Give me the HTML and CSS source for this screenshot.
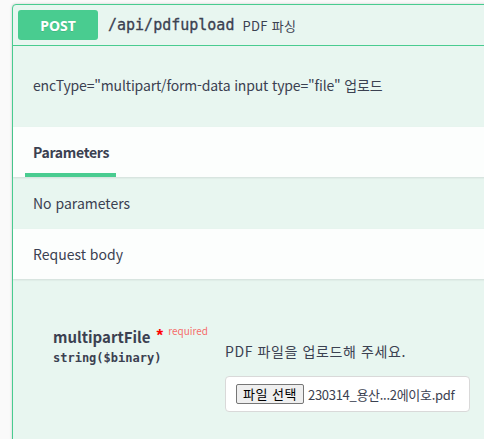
FILE: index.html
```html
<!DOCTYPE html>
<html lang="ko">
<head>
<meta charset="utf-8">
<link rel="stylesheet" href="styles.css">
</head>
<body>
<div class="opblock">
  <div class="summary">
    <span class="method">POST</span>
    <span class="path">/api/pdfupload</span>
    <span class="summary-desc">PDF 파싱</span>
  </div>
  <div class="description">encType="multipart/form-data input type="file" 업로드</div>
  <div class="section-header">
    <div class="tab"><span class="tab-label">Parameters</span></div>
  </div>
  <div class="no-params">No parameters</div>
  <div class="section-header body-header">
    <span class="plain-label">Request body</span>
  </div>
  <div class="body">
    <div class="param-row">
      <div class="param-name">
        <div class="name-line"><span class="name">multipartFile</span><span class="star">*</span><span class="required">required</span></div>
        <div class="type">string($binary)</div>
      </div>
      <div class="param-desc">
        <div class="desc-text">PDF 파일을 업로드해 주세요.</div>
        <div class="file-box"><span class="file-btn">파일 선택</span><span class="file-name">230314_용산...2에이호.pdf</span></div>
      </div>
    </div>
  </div>
</div>
</body>
</html>
```
FILE: styles.css
```css
html, body {
  margin: 0;
  padding: 0;
  background: #fafafa;
  font-family: "Noto Sans CJK KR", "Noto Sans", sans-serif;
  color: #3b4151;
}
body {
  padding: 4px 0 0 12px;
  overflow: hidden;
}
.opblock {
  width: 520px;
  border: 1px solid #49cc90;
  border-radius: 4px;
  background: #e8f6f0;
  box-shadow: 0 0 3px rgba(0,0,0,.19);
}
.summary {
  display: flex;
  align-items: center;
  padding: 5px;
  border-bottom: 1px solid #49cc90;
  height: 30px;
}
.method {
  width: 80px;
  height: 30px;
  background: #49cc90;
  color: #fff;
  border-radius: 3px;
  font-weight: 700;
  font-size: 14px;
  display: flex;
  align-items: center;
  justify-content: center;
  text-shadow: 0 1px 0 rgba(0,0,0,.1);
  font-family: "Noto Sans", sans-serif;
}
.path {
  margin-left: 10px;
  font-family: "DejaVu Sans Mono", monospace;
  font-size: 15px;
  font-weight: 400;
  -webkit-text-stroke: 0.3px #3b4151;
  color: #3b4151;
}
.summary-desc {
  margin-left: 8px;
  font-size: 13px;
  letter-spacing: 0.3px;
  color: #3b4151;
}
.description {
  padding: 29px 20px 0;
  height: 52px;
  font-size: 14px;
  line-height: 20px;
  letter-spacing: -0.15px;
}
.section-header {
  height: 50px;
  background: rgba(255,255,255,.85);
  box-shadow: 0 1px 2px rgba(0,0,0,.1);
  padding: 0 20px;
  display: flex;
  align-items: center;
  position: relative;
}
.tab {
  height: 50px;
  display: flex;
  align-items: center;
}
.tab-label {
  font-size: 14px;
  font-weight: 700;
  position: relative;
  letter-spacing: -0.3px;
}
.tab-label::after {
  content: "";
  position: absolute;
  left: -8px;
  right: -7px;
  bottom: -15px;
  height: 4px;
  background: #49cc90;
}
.no-params {
  height: 51px;
  padding: 0 20px;
  display: flex;
  align-items: center;
  font-size: 14px;
}
.body-header {
  margin-top: 1px;
}
.plain-label {
  font-size: 14px;
}
.body {
  height: 170px;
  padding: 46px 20px 0 40px;
}
.param-row {
  display: flex;
}
.param-name {
  width: 172px;
  padding-top: 2px;
}
.name-line {
  display: flex;
  align-items: flex-start;
}
.name {
  font-size: 15px;
  font-weight: 700;
  line-height: 20px;
}
.star {
  color: red;
  font-family: "Liberation Sans", sans-serif;
  font-size: 17px;
  font-weight: 700;
  margin-left: 6px;
  line-height: 18px;
}
.required {
  color: rgba(255,0,0,.6);
  font-size: 10px;
  margin-left: 5px;
  line-height: 12px;
  position: relative;
  top: -2px;
}
.type {
  font-family: "DejaVu Sans Mono", monospace;
  font-size: 12px;
  font-weight: 600;
  margin-top: 4px;
}
.param-desc {
  padding-top: 16px;
}
.desc-text {
  font-size: 14px;
  line-height: 20px;
  letter-spacing: 0.6px;
}
.file-box {
  margin-top: 15px;
  width: 223px;
  height: 34px;
  background: #fff;
  border: 1px solid #d9d9d9;
  border-radius: 4px;
  padding: 0 10px;
  display: flex;
  align-items: center;
  font-size: 13px;
}
.file-btn {
  border: 1px solid #767676;
  background: #efefef;
  border-radius: 2px;
  padding: 0 6px;
  height: 18px;
  line-height: 18px;
  font-size: 13px;
  letter-spacing: 0.5px;
  color: #000;
  margin-right: 4px;
}
.file-name {
  color: #3b4151;
  letter-spacing: -0.3px;
}
```
